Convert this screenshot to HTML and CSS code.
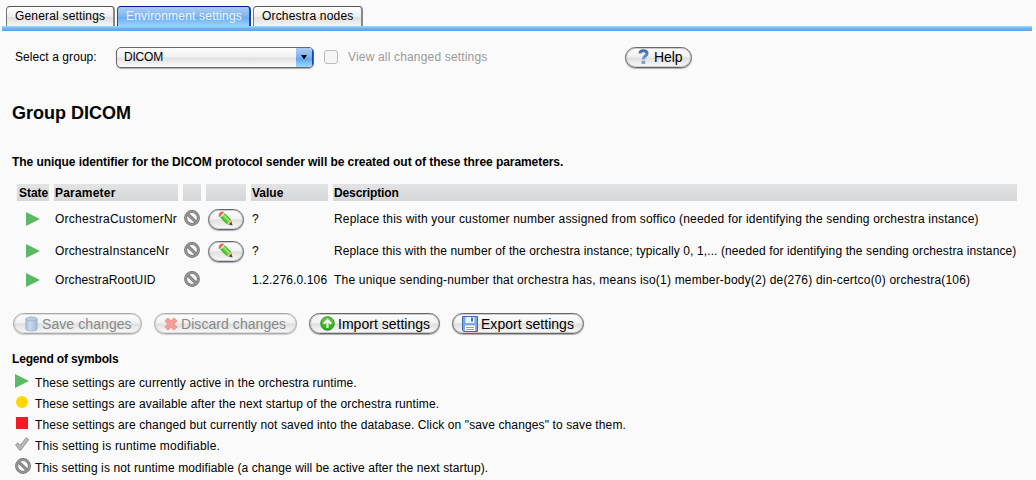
FILE: index.html
```html
<!DOCTYPE html>
<html lang="en">
<head>
<meta charset="utf-8">
<title>Environment settings</title>
<link rel="stylesheet" href="styles.css">
</head>
<body>
<svg class="defs" width="0" height="0" aria-hidden="true">
  <defs>
    <linearGradient id="g-blue" x1="0" y1="0" x2="0" y2="1"><stop offset="0" stop-color="#416fac"/><stop offset="1" stop-color="#7da2cf"/></linearGradient>
    <linearGradient id="g-can" x1="0" y1="0" x2="1" y2="0"><stop offset="0" stop-color="#a3b9d3"/><stop offset=".35" stop-color="#cbdbed"/><stop offset="1" stop-color="#9fb8d5"/></linearGradient>
    <linearGradient id="g-green" x1="0" y1="0" x2="0" y2="1"><stop offset="0" stop-color="#6ccb48"/><stop offset="1" stop-color="#2aa61c"/></linearGradient>
    <symbol id="play" viewBox="0 0 14 14"><path d="M0 0L14 7L0 14Z" fill="#5bb966"/></symbol>
    <symbol id="ban" viewBox="0 0 16 16"><circle cx="8" cy="8" r="6.4" fill="none" stroke="#727272" stroke-width="3"/><path d="M3.5 3.8L12.4 12.4" stroke="#727272" stroke-width="3"/><circle cx="8" cy="8" r="6.4" fill="none" stroke="#959595" stroke-width="1.7"/><path d="M3.5 3.8L12.4 12.4" stroke="#959595" stroke-width="1.7"/></symbol>
    <symbol id="pencil" viewBox="0 0 15 15"><path d="M5 .9L1 4.9L8.6 12.6L13.8 13.9L12.6 8.6Z" fill="#4ccb2c" stroke="#37a02a" stroke-width=".7"/><path d="M5.2 4L11 9.8" stroke="#8fee62" stroke-width="2"/><path d="M4.6 .4C2.6 .2 .6 2.2 .7 4.2L2.1 5.6L6 1.8Z" fill="#ea6259"/><path d="M6.3 2L2.3 6" stroke="#f4e6e2" stroke-width="1.2"/><path d="M8.6 12.6L12.6 8.6L14.3 14.2Z" fill="#efb887"/><path d="M10.9 13.2L13.3 10.9L14.6 14.5Z" fill="#444"/></symbol>
  </defs>
</svg>

<nav class="tabs">
  <a class="tab tab-general"><span>General settings</span></a>
  <a class="tab tab-env active"><span>Environment settings</span></a>
  <a class="tab tab-nodes"><span>Orchestra nodes</span></a>
</nav>
<div class="tab-bar"></div>

<form class="filter">
  <span class="filter-label">Select a group:</span>
  <div class="select"><span>DICOM</span><i class="arrow"><svg width="6" height="5" viewBox="0 0 6 5"><path d="M0 0H6L3 4.5Z"/></svg></i></div>
  <span class="check"></span>
  <span class="check-label">View all changed settings</span>
  <button type="button" class="btn help"><svg width="11" height="16" viewBox="0 0 11 16"><path d="M2 4.4C2 1 9 .8 9 4.4C9 7.1 5.4 6.9 5.4 10.4" fill="none" stroke="url(#g-blue)" stroke-width="3.2"/><rect x="3.4" y="11.8" width="4" height="3.2" rx="1" fill="#7da2cf"/></svg><span>Help</span></button>
</form>

<main>
  <h1><span>Group DICOM</span></h1>
  <p class="intro"><span>The unique identifier for the DICOM protocol sender will be created out of these three parameters.</span></p>

  <div class="grid">
    <div class="row head"><b>State</b><b class="h-param">Parameter</b><b></b><b></b><b>Value</b><b class="h-desc">Description</b></div>
    <div class="row">
      <svg class="state"><use href="#play"/></svg><span class="p1">OrchestraCustomerNr</span><svg class="ban"><use href="#ban"/></svg>
      <button type="button" class="btn edit"><svg width="15" height="15"><use href="#pencil"/></svg></button>
      <span>?</span><span class="d1">Replace this with your customer number assigned from soffico (needed for identifying the sending orchestra instance)</span>
    </div>
    <div class="row">
      <svg class="state"><use href="#play"/></svg><span class="p2">OrchestraInstanceNr</span><svg class="ban"><use href="#ban"/></svg>
      <button type="button" class="btn edit"><svg width="15" height="15"><use href="#pencil"/></svg></button>
      <span>?</span><span class="d2">Replace this with the number of the orchestra instance; typically 0, 1,... (needed for identifying the sending orchestra instance)</span>
    </div>
    <div class="row short">
      <svg class="state"><use href="#play"/></svg><span class="p3">OrchestraRootUID</span><svg class="ban"><use href="#ban"/></svg>
      <span></span>
      <span class="uid">1.2.276.0.106</span><span class="d3">The unique sending-number that orchestra has, means iso(1) member-body(2) de(276) din-certco(0) orchestra(106)</span>
    </div>
  </div>

  <div class="actions">
    <button type="button" class="btn save" disabled><svg width="13" height="16" viewBox="0 0 13 16"><path d="M.8 3V13.5C2 15.6 11 15.6 12.2 13.5V3Z" fill="url(#g-can)" stroke="#a5b8cf" stroke-width=".7"/><ellipse cx="6.5" cy="2.8" rx="5.7" ry="2" fill="#bdcbdc" stroke="#9db2cc" stroke-width=".7"/></svg><span>Save changes</span></button>
    <button type="button" class="btn discard" disabled><svg width="14" height="14" viewBox="0 0 14 14"><path d="M2.2 2.2L11.8 11.8M11.8 2.2L2.2 11.8" stroke="#ea8986" stroke-width="4.8"/><path d="M2.5 2.5L11.5 11.5M11.5 2.5L2.5 11.5" stroke="#f3a09d" stroke-width="3.2"/></svg><span>Discard changes</span></button>
    <button type="button" class="btn import"><svg width="15" height="15" viewBox="0 0 15 15"><circle cx="7.5" cy="7.5" r="6.8" fill="url(#g-green)" stroke="#2c9424"/><path d="M7.5 12V4.5M3.8 7.8L7.5 4L11.2 7.8" fill="none" stroke="#fff" stroke-width="2"/></svg><span>Import settings</span></button>
    <button type="button" class="btn export"><svg width="16" height="16" viewBox="0 0 16 16"><path d="M.5 .5H15.5V15.5H1.5L.5 14.5Z" fill="#7ba9e4" stroke="#3d69ae"/><rect x="3.5" y="1" width="9" height="6" fill="#e9f1fb"/><rect x="9" y="1.5" width="2" height="4" fill="#4a75b5"/><rect x="3" y="9.5" width="10" height="5.5" fill="#fff"/><path d="M4 11.5H12M4 13.5H12" stroke="#82b56c" stroke-width="1"/></svg><span>Export settings</span></button>
  </div>

  <h2><span>Legend of symbols</span></h2>
  <ul class="legend">
    <li><svg width="14" height="14"><use href="#play"/></svg><span class="l1">These settings are currently active in the orchestra runtime.</span></li>
    <li><svg width="14" height="12"><circle cx="7" cy="6" r="6" fill="#ffd800"/></svg><span class="l2">These settings are available after the next startup of the orchestra runtime.</span></li>
    <li><svg width="14" height="12"><rect x="1" width="12" height="12" fill="#ee1c24"/></svg><span class="l3">These settings are changed but currently not saved into the database. Click on "save changes" to save them.</span></li>
    <li><svg width="14" height="14" viewBox="0 0 14 14"><path d="M.5 7.8L2.8 5.8L5 8.3L11.3 .7L13.7 2.5L5.8 13.2H4.6Z" fill="#b8b8b8" stroke="#888" stroke-width=".8"/></svg><span class="l4">This setting is runtime modifiable.</span></li>
    <li><svg width="16" height="16"><use href="#ban"/></svg><span class="l5">This setting is not runtime modifiable (a change will be active after the next startup).</span></li>
  </ul>
</main>
</body>
</html>
```
FILE: styles.css
```css
* { box-sizing: border-box; }
body { margin: 0; background: #fafafa; color: #000; font: 12px/14px "Liberation Sans", Arial, sans-serif; white-space: nowrap; }
.defs { position: absolute; }
svg { display: block; flex: none; }
h1, h2, p, ul { margin: 0; padding: 0; }

.tabs { display: flex; gap: 2px; height: 26px; padding: 6px 0 0 6px; }
.tab-bar { width: 1030px; height: 5px; margin-left: 2px; background: linear-gradient(#9adcff, #6db4fa 50%, #5b9fee); }
.tab { height: 20px; padding: 2px 0 0 8px; border: 1px solid #555; border-width: 1px 2px 0 1px; border-color: #555 #888 #888 #777; border-radius: 4px 4px 0 0; background: linear-gradient(#fff, #eee 50%, #ddd 51%, #f4f4f4); letter-spacing: .18px; }
.tab-general { width: 109px; }
.tab-env { width: 134px; letter-spacing: .2px; }
.tab-nodes { width: 110px; }
.tab.active { color: #eaf5ff; border-color: #0018a0 #1944a8 #2a60c0 #174aac; background: linear-gradient(#aecdf2, #7fb4ef 50%, #69a8ef 51%, #9bd2ff); }

.filter { display: flex; align-items: center; height: 22px; margin-top: 15px; padding-left: 15px; }
.filter-label { width: 101px; letter-spacing: .07px; }
.select { display: flex; width: 198px; height: 21px; align-items: center; justify-content: space-between; padding-left: 7px; border: 1px solid #666; border-radius: 5px; background: linear-gradient(#fff, #f0f0f0 48%, #dfdfdf 52%, #fbfbfb); box-shadow: 0 1px 1px #aaa; overflow: hidden; }
.select span { letter-spacing: -.2px; }
.arrow { display: flex; width: 17px; height: 21px; align-items: center; justify-content: center; background: linear-gradient(#a9cdf4, #78b1f0 50%, #5fa5ef 51%, #a3dfff); border-top: 1px solid #0a2390; border-right: 1px solid #1a4a9c; }
.check { width: 14px; height: 14px; margin-left: 10px; border: 1px solid #bbb; border-radius: 3px; background: #f5f5f5; }
.check-label { width: 277px; margin-left: 10px; color: #999; letter-spacing: .17px; }

.btn { display: flex; align-items: center; height: 21px; margin: 0; padding: 0; border: 1px solid #666; border-radius: 11px; background: linear-gradient(#fff, #f0f0f0 48%, #dedede 52%, #fafafa); box-shadow: 0 1px 1px #aaa, inset 0 0 0 1px #ccc; color: #000; font: 14px/16px "Liberation Sans", Arial, sans-serif; }
.btn:disabled { color: #888; border-color: #aaa; box-shadow: 0 1px 1px #ccc, inset 0 0 0 1px #ddd; }
.help { width: 67px; padding-left: 12px; gap: 5px; letter-spacing: -.1px; }
.edit { width: 36px; margin-left: 2px; justify-content: center; }
.edit svg { margin: 0 1px 1px 0; }

main { padding-left: 12px; }
h1 { margin-top: 35px; font-size: 18px; line-height: 20px; }
.intro { margin-top: 32px; font-weight: bold; letter-spacing: -.063px; }
.grid { margin: 15px 0 0 5px; }
.row { display: grid; grid-template-columns: 32px 124px 18px 40px 77px 684px; gap: 5px; height: 32px; align-items: center; }
.row > span { padding-left: 1px; }
.row.head { height: 17px; margin-bottom: 2px; }
.row.short { height: 26px; }
.head b { height: 17px; padding: 2px 0 0 1px; background: linear-gradient(#e2e3e4, #d5d6d8); }
.head b:first-child { padding-left: 2px; letter-spacing: -.05px; }
.head .h-param { letter-spacing: .2px; }
.head .h-desc { letter-spacing: -.12px; }
.state { width: 14px; height: 14px; margin-left: 9px; }
.ban { width: 16px; height: 16px; margin: 0 0 2px 1px; }
.p1 { letter-spacing: .25px; }
.p2 { letter-spacing: .18px; }
.p3 { letter-spacing: .12px; }
.uid { letter-spacing: .14px; }
.d1 { letter-spacing: .183px; }
.d2 { letter-spacing: .108px; }
.d3 { letter-spacing: .2px; }

.actions { display: flex; margin: 20px 0 0 1px; }
.save { width: 129px; padding-left: 11px; gap: 4px; letter-spacing: .08px; }
.discard { width: 143px; margin-left: 12px; padding-left: 9px; gap: 3px; letter-spacing: .06px; }
.import { width: 131px; margin-left: 12px; padding-left: 10px; gap: 3px; letter-spacing: .02px; }
.export { width: 132px; margin-left: 12px; padding-left: 9px; gap: 3px; letter-spacing: .02px; }

h2 { margin-top: 18px; font-size: 12px; line-height: 14px; letter-spacing: -.17px; }
.legend { margin-top: 4px; list-style: none; }
.legend li { display: flex; height: 21px; align-items: center; padding-left: 3px; }
.legend span { margin: 5px 0 0 6px; }
.legend li:last-child { height: 23px; }
.legend li:last-child span { margin-left: 4px; }
.l1, .l2 { letter-spacing: .103px; }
.l3 { letter-spacing: .113px; }
.l4 { letter-spacing: .2px; }
.l5 { letter-spacing: .11px; }
```
